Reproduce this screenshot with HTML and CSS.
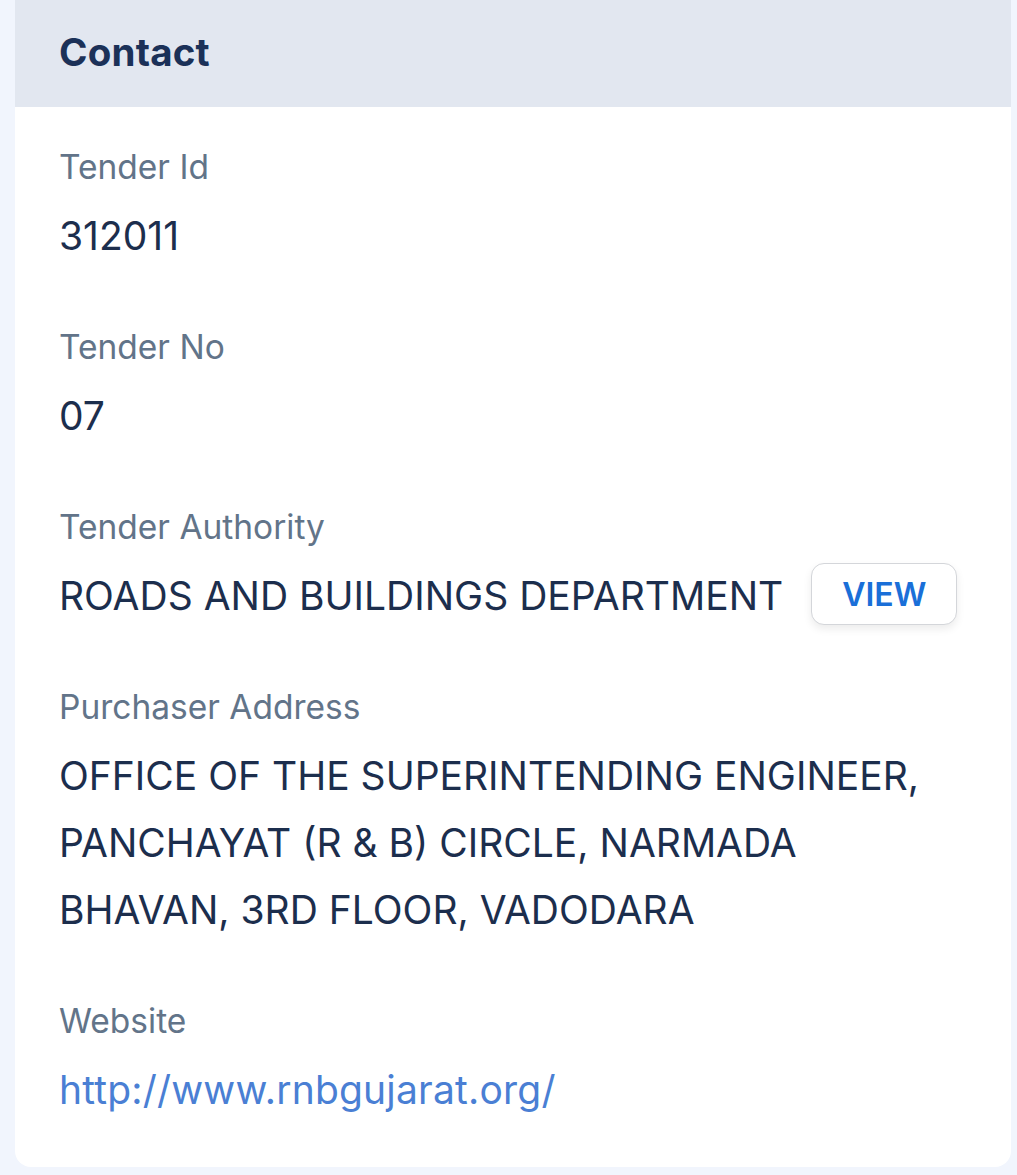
FILE: index.html
```html
<!DOCTYPE html>
<html lang="en">
<head>
    <meta charset="UTF-8">
    <meta name="viewport" content="width=device-width, initial-scale=1.0">
    <title>Contact</title>
    <link rel="stylesheet" href="styles.css">
</head>
<body>
    <div class="card">
        <div class="card-header">
            <h2>Contact</h2>
        </div>

        <div class="card-body">
            <div class="field">
                <div class="field-label">Tender Id</div>
                <div class="field-value">312011</div>
            </div>

            <div class="field">
                <div class="field-label">Tender No</div>
                <div class="field-value">07</div>
            </div>

            <div class="field">
                <div class="field-label">Tender Authority</div>
                <div class="field-row">
                    <div class="field-value">ROADS AND BUILDINGS DEPARTMENT</div>
                    <button class="view-btn">VIEW</button>
                </div>
            </div>

            <div class="field">
                <div class="field-label">Purchaser Address</div>
                <div class="field-value">OFFICE OF THE SUPERINTENDING ENGINEER, PANCHAYAT (R &amp; B) CIRCLE, NARMADA BHAVAN, 3RD FLOOR, VADODARA</div>
            </div>

            <div class="field">
                <div class="field-label">Website</div>
                <a class="field-link" href="#">http://www.rnbgujarat.org/</a>
            </div>
        </div>
    </div>
</body>
</html>
```

FILE: styles.css
```css
:root {
    --page-bg: #f1f5fd;
    --header-bg: #e2e7f0;
    --title-color: #1b3158;
    --label-color: #627489;
    --value-color: #1c2e4d;
    --link-color: #4a7fd4;
    --button-color: #1a6fd8;
}

* {
    margin: 0;
    padding: 0;
    box-sizing: border-box;
    font-family: Inter, 'Noto Sans', sans-serif;
}

body {
    background-color: var(--page-bg);
    padding: 0 6px 7px 15px;
    min-height: 100vh;
}

.card {
    background: #ffffff;
    border-radius: 0 0 16px 16px;
    overflow: hidden;
}

.card-header {
    background: var(--header-bg);
    height: 107px;
    padding: 28px 44px 0;
}

.card-header h2 {
    font-size: 38.5px;
    font-weight: 700;
    line-height: 48px;
    color: var(--title-color);
    letter-spacing: 0.2px;
}

.card-body {
    padding: 36px 44px 44px;
    display: flex;
    flex-direction: column;
    gap: 54px;
}

.field-label {
    font-size: 33.5px;
    line-height: 48px;
    color: var(--label-color);
    margin-bottom: 11px;
}

.field-value {
    font-size: 39px;
    line-height: 67px;
    color: var(--value-color);
}

.field-row {
    display: flex;
    align-items: center;
    gap: 28px;
}

.view-btn {
    background: #ffffff;
    border: 1.5px solid #d4d6da;
    border-radius: 13px;
    width: 146px;
    height: 62px;
    font-size: 32px;
    font-weight: 600;
    color: var(--button-color);
    box-shadow: 0 4px 8px rgba(0, 0, 0, 0.08);
    cursor: pointer;
    margin-top: -3px;
}

.field-link {
    display: block;
    font-size: 39px;
    line-height: 67px;
    color: var(--link-color);
    text-decoration: none;
    letter-spacing: 0.2px;
}
```
